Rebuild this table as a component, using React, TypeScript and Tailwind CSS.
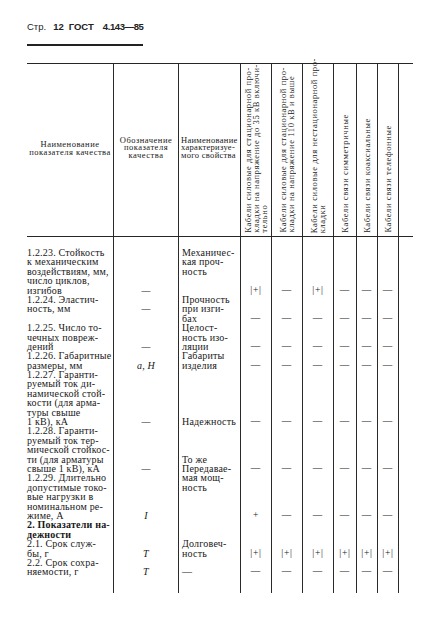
import React from 'react';

const LINE = 'h-[9.4px] leading-[9.4px] whitespace-nowrap';

// left column: one entry per printed line
const col1: { t: string; b?: boolean }[] = [
  { t: '1.2.23. Стойкость' },
  { t: 'к механическим' },
  { t: 'воздействиям, мм,' },
  { t: 'число циклов,' },
  { t: 'изгибов' },
  { t: '1.2.24. Эластич-' },
  { t: 'ность, мм' },
  { t: '' },
  { t: '1.2.25. Число то-' },
  { t: 'чечных повреж-' },
  { t: 'дений' },
  { t: '1.2.26. Габаритные' },
  { t: 'размеры, мм' },
  { t: '1.2.27. Гаранти-' },
  { t: 'руемый ток ди-' },
  { t: 'намической стой-' },
  { t: 'кости (для арма-' },
  { t: 'туры свыше' },
  { t: '1 кВ), кА' },
  { t: '1.2.28. Гаранти-' },
  { t: 'руемый ток тер-' },
  { t: 'мической стойкос-' },
  { t: 'ти (для арматуры' },
  { t: 'свыше 1 кВ), кА' },
  { t: '1.2.29. Длительно' },
  { t: 'допустимые токо-' },
  { t: 'вые нагрузки в' },
  { t: 'номинальном ре-' },
  { t: 'жиме, А' },
  { t: '2. Показатели на-', b: true },
  { t: 'дежности', b: true },
  { t: '2.1. Срок служ-' },
  { t: 'бы, г' },
  { t: '2.2. Срок сохра-' },
  { t: 'няемости, г' },
];

const col2: Record<number, string> = {
  4: '—', 6: '—', 10: '—', 12: 'a, H', 18: '—', 23: '—', 28: 'I', 32: 'T', 34: 'T',
};

const col3: Record<number, string> = {
  0: 'Механичес-', 1: 'кая проч-', 2: 'ность',
  5: 'Прочность', 6: 'при изги-', 7: 'бах',
  8: 'Целост-', 9: 'ность изо-', 10: 'ляции',
  11: 'Габариты', 12: 'изделия',
  18: 'Надежность',
  22: 'То же', 23: 'Передавае-', 24: 'мая мощ-', 25: 'ность',
  31: 'Долговеч-', 32: 'ность', 34: '—',
};

const d6 = ['—', '—', '—', '—', '—', '—'];
const marks: Record<number, string[]> = {
  4: ['|+|', '—', '|+|', '—', '—', '—'],
  7: d6, 10: d6, 12: d6, 18: d6, 23: d6,
  28: ['+', '—', '—', '—', '—', '—'],
  32: ['|+|', '|+|', '|+|', '|+|', '|+|', '|+|'],
  34: d6,
};

const kinds = [
  ['Кабели силовые для стационарной про-', 'кладки на напряжение до 35 кВ включи-', 'тельно'],
  ['Кабели силовые для стационарной про-', 'кладки на напряжение 110 кВ и выше'],
  ['Кабели силовые для нестационарной про-', 'кладки'],
  ['Кабели связи симметричные'],
  ['Кабели связи коаксиальные'],
  ['Кабели связи телефонные'],
];

const GRID = 'grid grid-cols-[86px_65px_62px_31px_31px_31px_23px_21px_21px_15px]';
const N = 36;

function Stack({ get, className = '' }: { get: (i: number) => React.ReactNode; className?: string }) {
  return (
    <div className={`flex flex-col pt-[11px] ${className}`}>
      {Array.from({ length: N }, (_, i) => (
        <div key={i} className={LINE}>{get(i)}</div>
      ))}
    </div>
  );
}

export default function App() {
  return (
    <div className="w-[434px] h-[619px] bg-white overflow-hidden text-[#181818] font-['Liberation_Serif',serif]">
      {/* Page heading */}
      <div className="pl-[27px] pt-[21px]">
        <div className="flex w-fit items-baseline gap-[5px] whitespace-nowrap border-b-2 border-[#222] pb-[11px] font-['Liberation_Sans',sans-serif] text-[9.5px] leading-[12px] text-[#222]">
          <span className="mr-[2px]">Стр.</span>
          <span className="font-bold">12</span>
          <span className="font-bold">ГОСТ</span>
          <span className="ml-[4px] font-bold tracking-[-0.4px]">4.143—85</span>
        </div>
      </div>

      {/* Table */}
      <div className="ml-[27px] mt-[17px] w-[386px]">
        {/* header */}
        <div className={`${GRID} grid-rows-[minmax(0,1fr)] h-[174px] border-y-[1.5px] border-[#262626] text-[8.5px] leading-[7.6px] tracking-[0.5px]`}>
          <div className="flex items-center justify-center pb-[2px] text-center">
            Наименование<br />показателя качества
          </div>
          <div className="flex items-center justify-center border-l border-[#2a2a2a] pb-[4px] text-center">
            Обозначение<br />показателя<br />качества
          </div>
          <div className="flex items-center whitespace-nowrap border-l border-[#2a2a2a] pb-[4px] pl-[2px] tracking-[0.3px]">
            Наименование<br />характеризуе-<br />мого свойства
          </div>
          {kinds.map((k, i) => (
            <div key={i} className="flex min-h-0 items-end justify-center border-l border-[#2a2a2a] pb-[3px]">
              <div className="rotate-180 [writing-mode:vertical-rl] text-[8.5px] leading-[8px] tracking-[0.6px] whitespace-nowrap">
                {k.map((l, j) => (
                  <div key={j}>{l}</div>
                ))}
              </div>
            </div>
          ))}
          <div className="border-l border-[#2a2a2a]" />
        </div>

        {/* body */}
        <div className={`${GRID} h-[356px] text-[10px] tracking-[0.2px]`}>
          <Stack get={(i) => (col1[i] ? <span className={col1[i].b ? 'font-bold' : ''}>{col1[i].t}</span> : null)} />
          <Stack className="items-center border-l border-[#2a2a2a]" get={(i) => <span className="italic">{col2[i] ?? ''}</span>} />
          <Stack className="border-l border-[#2a2a2a] pl-[3px]" get={(i) => col3[i] ?? ''} />
          {[0, 1, 2, 3, 4, 5].map((c) => (
            <Stack key={c} className="items-center border-l border-[#2a2a2a] text-[9.5px] tracking-[0.8px]" get={(i) => (marks[i] ? marks[i][c] : '')} />
          ))}
          <div className="border-l border-[#2a2a2a]" />
        </div>
      </div>
    </div>
  );
}
